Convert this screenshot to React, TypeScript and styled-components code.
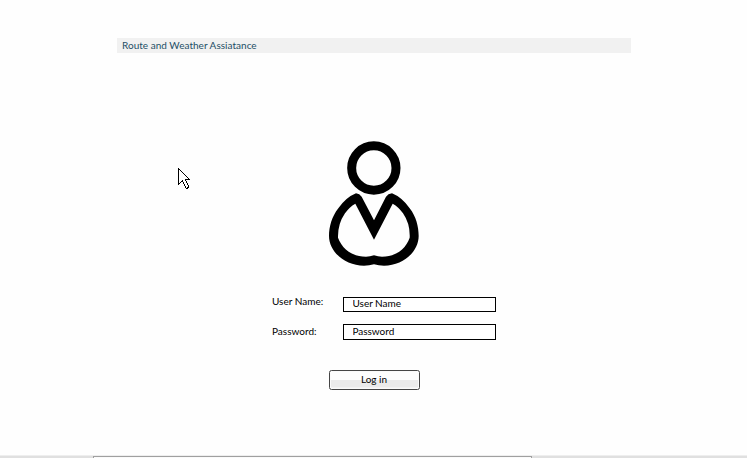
import React from 'react';
import styled, { createGlobalStyle } from 'styled-components';

const Global = createGlobalStyle`
  *{box-sizing:border-box}
  body{margin:0;background:#fefefe;overflow:hidden;font-family:Lato,"Liberation Sans",sans-serif;font-size:10px;color:#000}
`;
const Page = styled.div`
  width:747px;height:458px;display:flex;flex-direction:column;position:relative;
`;
const TitleBar = styled.header`
  margin:38px 0 0 117px;width:514px;height:15px;background:#f1f1f1;
  padding-left:5px;line-height:15px;color:#1d4f66;letter-spacing:.02px;white-space:nowrap;
`;
const Avatar = styled.svg`
  display:block;margin:82px 0 0 320px;width:110px;height:140px;
`;
const Form = styled.form`
  margin:22px 0 0 272px;width:224px;display:flex;flex-direction:column;
`;
const Row = styled.div<{ $gap?: number }>`
  display:flex;margin-top:${p => p.$gap ?? 0}px;
`;
const Label = styled.label<{ $lift: number }>`
  width:71px;line-height:15px;margin-top:${p => p.$lift}px;white-space:nowrap;
`;
const Input = styled.input<{ $height: number; $bottom: number }>`
  width:153px;height:${p => p.$height}px;border:1px solid #000;border-radius:0;background:#fff;
  padding:0 0 ${p => p.$bottom}px 8.5px;font:inherit;line-height:11px;letter-spacing:-.03px;color:#000;outline:none;
  &::placeholder{color:#000;opacity:1}
`;
const Button = styled.button`
  margin:30px 0 0 57px;width:91px;height:20px;padding:0 1px 2px 0;border:1px solid #454545;border-radius:2.5px;
  background:linear-gradient(#fdfdfd 0 48%,#ebebeb 52% 88%,#fafafa 95%);
  box-shadow:inset 0 0 0 1px #fafafa;font:inherit;color:#000;
`;
const Footer = styled.footer`
  margin-top:auto;height:3px;background:#e0e0e0;border-top:1px solid #eee;padding-left:93px;
`;
const FooterPanel = styled.div`
  width:439px;height:2px;background:#fafafa;border:1px solid #a0a0a0;border-bottom:0;
`;
const Pointer = styled.svg`
  position:absolute;left:178px;top:168px;width:13px;height:22px;
`;

export default function App() {
  return (
    <Page>
      <Global />
      <TitleBar>Route and Weather Assiatance</TitleBar>
      <Avatar viewBox="0 0 330 420">
        <circle cx="161.5" cy="99" r="66.500" fill="none" stroke="#000" strokeWidth="27" />
        <path fillRule="evenodd" d="M108 175Q119 176 125 185L162 256L198 185Q204 176 216 175Q246 187 269 220C288 244 296 275 296 303C296 350 249 392 192 392Q176 392 162 388Q148 392 132 392C75 392 27 350 27 303C27 275 36 244 55 220Q78 187 108 175ZM106 206Q88 216 75 235Q53 267 54 308C66 340 95 365 138 365Q150 365 162 361Q174 365 186 365C229 365 258 340 269 308Q271 267 249 235Q236 216 218 206L162 314Z" />
      </Avatar>
      <Form onSubmit={e => e.preventDefault()}>
        <Row>
          <Label htmlFor="user" $lift={-3}>User Name:</Label>
          <Input id="user" placeholder="User Name" $height={15} $bottom={3} />
        </Row>
        <Row $gap={12}>
          <Label htmlFor="password" $lift={0}>Password:</Label>
          <Input id="password" placeholder="Password" $height={16} $bottom={2} />
        </Row>
        <Button>Log in</Button>
      </Form>
      <Footer><FooterPanel /></Footer>
      <Pointer viewBox="0 0 13 22" fill="#fff" stroke="#000" shapeRendering="crispEdges">
        <path d="M.5 .5V16.500L4.500 12.500L7.500 19.500L8.500 20.500L10.500 19.500L10.500 18.500L7.500 11.500H11.500Z" />
      </Pointer>
    </Page>
  );
}
